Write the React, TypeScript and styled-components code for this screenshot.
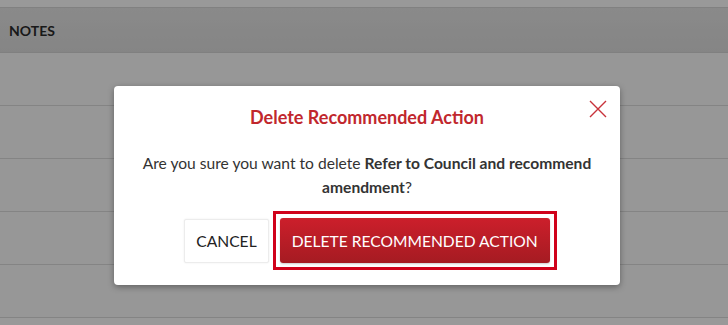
import React from "react";
import styled, { createGlobalStyle } from "styled-components";

const Global = createGlobalStyle`
  html, body { margin: 0; padding: 0; }
  body {
    font-family: Lato, "Open Sans", "Liberation Sans", sans-serif;
    background: #ffffff;
    width: 728px;
    height: 325px;
    overflow: hidden;
  }
  * { box-sizing: border-box; }
`;

const Page = styled.div`
  width: 728px;
  height: 325px;
  position: relative;
  overflow: hidden;
  background: #ffffff;
`;

const TopStrip = styled.div`
  height: 7px;
  background: #ffffff;
`;

const HeaderRow = styled.div`
  height: 46px;
  display: flex;
  align-items: center;
  padding-left: 9px;
  background: linear-gradient(#e6e6e6, #dedede);
  border-top: 1px solid #d8d8d8;
  border-bottom: 1px solid #d6d6d6;
  font-size: 14px;
  font-weight: 700;
  color: #2b2b2b;
`;

const Row = styled.div`
  height: 53px;
  border-bottom: 1px solid #dcdcdc;
  background: #fcfcfc;
`;

const Overlay = styled.div`
  position: absolute;
  inset: 0;
  background: rgba(0, 0, 0, 0.4);
  display: flex;
  justify-content: center;
  align-items: flex-start;
  padding: 86px 0 0 6px;
`;

const Dialog = styled.div`
  position: relative;
  width: 506px;
  background: #ffffff;
  border-radius: 4px;
  box-shadow: 0 2px 6px rgba(0, 0, 0, 0.35);
  padding: 20px 20px 22px;
  display: flex;
  flex-direction: column;
  align-items: center;
`;

const Title = styled.h2`
  margin: 0;
  font-size: 18px;
  font-weight: 700;
  line-height: 23px;
  color: #c1272d;
  text-align: center;
`;

const Message = styled.p`
  margin: 22px 0 0;
  font-size: 15.6px;
  line-height: 24px;
  color: #333333;
  text-align: center;
  max-width: 466px;

  strong {
    font-weight: 700;
  }
`;

const Actions = styled.div`
  margin-top: 19px;
  display: flex;
  align-items: center;
  gap: 11px;
`;

const CancelButton = styled.button`
  height: 44px;
  padding: 0 11px;
  background: #ffffff;
  border: 1px solid #ececec;
  border-radius: 2px;
  box-shadow: 0 0 2px rgba(0, 0, 0, 0.08);
  font-family: inherit;
  font-size: 15.6px;
  color: #222222;
  text-transform: uppercase;
  cursor: pointer;
`;

const DangerButton = styled.button`
  position: relative;
  height: 45px;
  padding: 0 12px;
  background: linear-gradient(#cc1f2b, #a51b22);
  border: none;
  border-radius: 3px;
  box-shadow: 0 1px 2px rgba(0, 0, 0, 0.2);
  outline: none;
  font-family: inherit;
  font-size: 15.6px;
  color: #ffffff;
  text-transform: uppercase;
  cursor: pointer;

  &::after {
    content: "";
    position: absolute;
    inset: -7px;
    border: 3px solid #d0021b;
    pointer-events: none;
  }
`;

const CloseButton = styled.button`
  position: absolute;
  top: 14px;
  right: 13px;
  width: 18px;
  height: 18px;
  padding: 0;
  border: none;
  background: transparent;
  cursor: pointer;
  display: flex;

  svg {
    display: block;
  }
`;

export default function App() {
  return (
    <>
      <Global />
      <Page>
        <TopStrip />
        <HeaderRow>NOTES</HeaderRow>
        <Row />
        <Row />
        <Row />
        <Row />
        <Row />
        <Overlay>
          <Dialog role="dialog">
            <CloseButton aria-label="Close">
              <svg width="18" height="18" viewBox="0 0 18 18">
                <path
                  d="M1 1 L17 17 M17 1 L1 17"
                  stroke="#c8323a"
                  strokeWidth="1.4"
                  fill="none"
                />
              </svg>
            </CloseButton>
            <Title>Delete Recommended Action</Title>
            <Message>
              Are you sure you want to delete{" "}
              <strong>Refer to Council and recommend amendment</strong>?
            </Message>
            <Actions>
              <CancelButton>Cancel</CancelButton>
              <DangerButton>Delete Recommended Action</DangerButton>
            </Actions>
          </Dialog>
        </Overlay>
      </Page>
    </>
  );
}
